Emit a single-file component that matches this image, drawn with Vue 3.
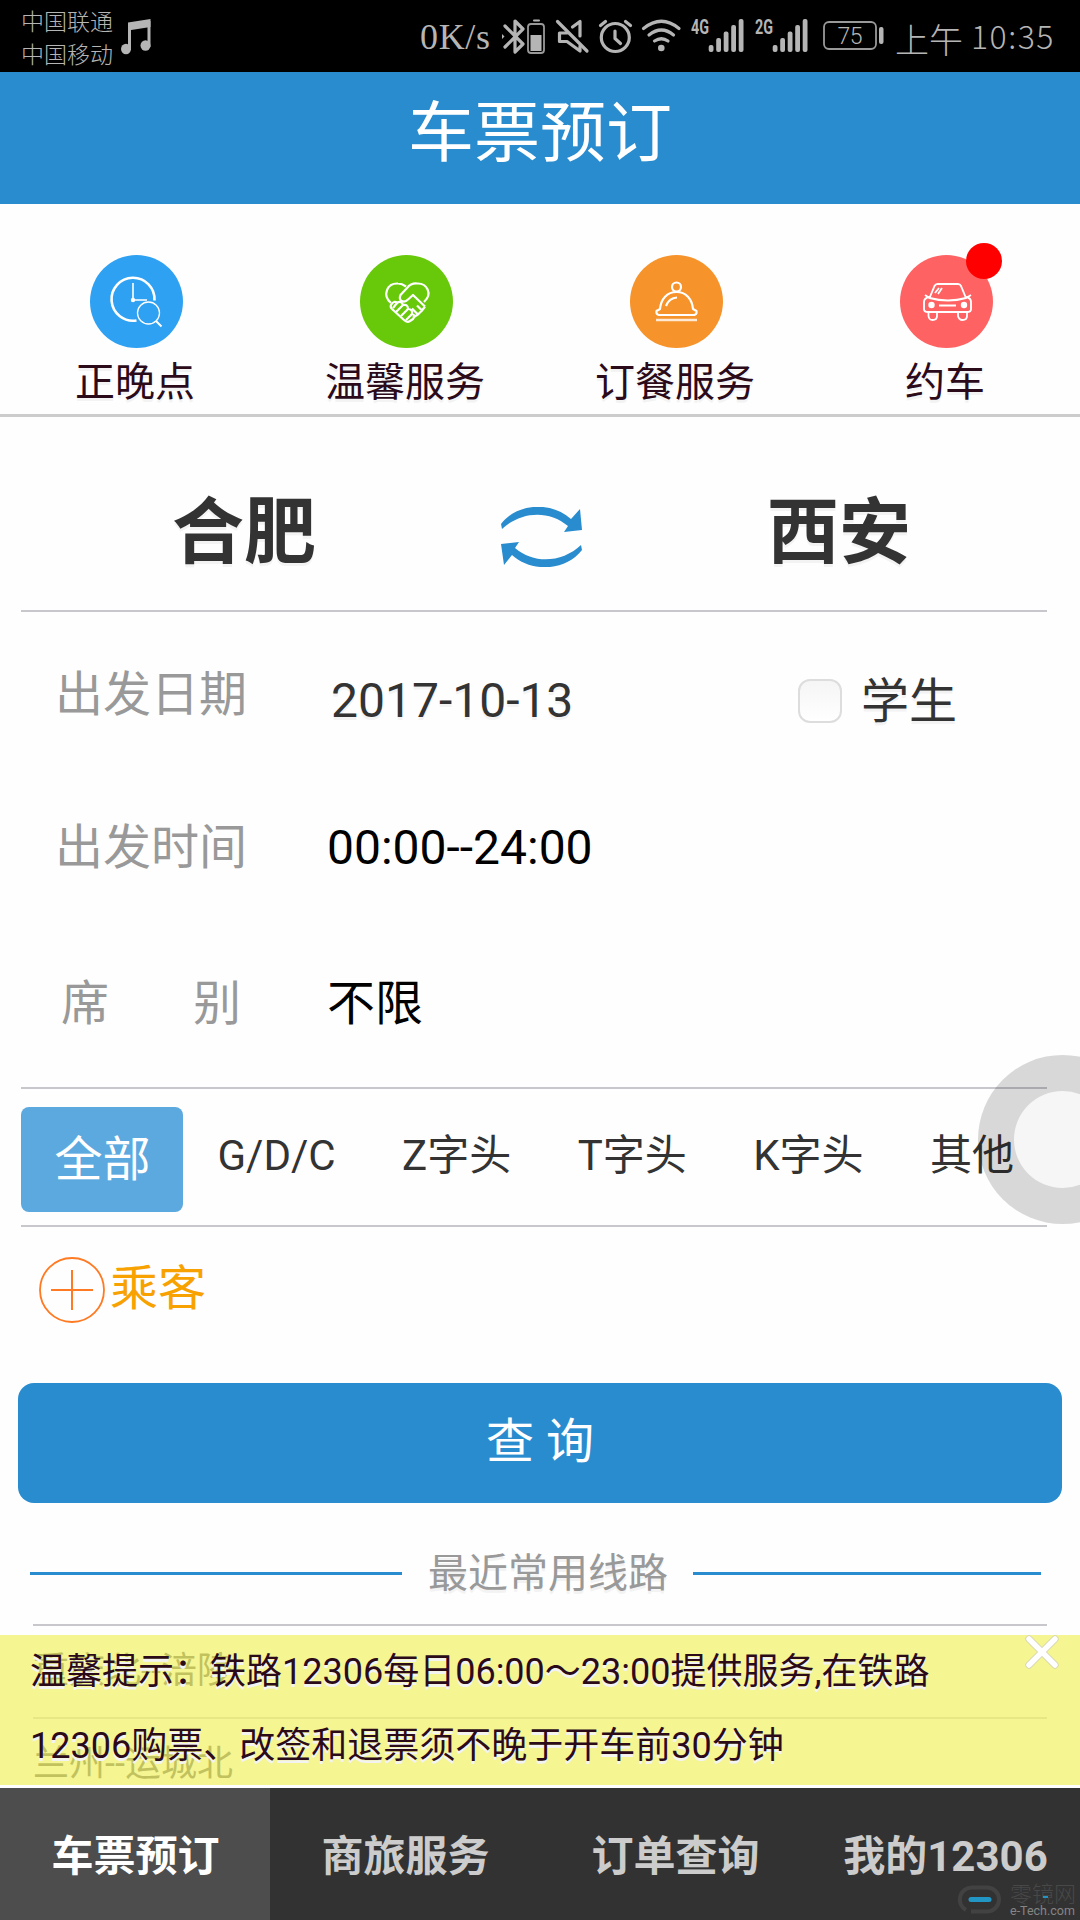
<template>
  <div class="page">
    <div class="status-bar">
      <div class="carriers">
        <div>中国联通</div>
        <div>中国移动</div>
      </div>
      <svg class="music" width="32" height="38" viewBox="0 0 32 38">
        <path d="M8.500 6 V32 M28 3 V29" fill="none" stroke="#b5b5b5" stroke-width="3" />
        <path d="M7 4.500 L29.500 1 V9 L7 12.500 Z" fill="#b5b5b5" />
        <ellipse cx="5" cy="31" rx="5" ry="5.200" fill="#b5b5b5" />
        <ellipse cx="24.500" cy="27.500" rx="5" ry="5.200" fill="#b5b5b5" />
      </svg>
      <div class="speed"><span>0</span><span>K</span><span>/</span><span>s</span></div>
      <svg class="status-icons" width="390" height="72" viewBox="500 0 390 72">
        <g fill="none" stroke="#b5b5b5" stroke-width="3.200" stroke-linecap="round" stroke-linejoin="round">
          <path d="M505 26 L523 44 L515 52 V21 L523 29 L505 47" />
          <path d="M502 34 v5 l2.500 -2.500z" stroke="none" fill="#b5b5b5" />
          <rect x="528" y="24" width="16" height="29" rx="3" stroke="#999" stroke-width="1.800" />
          <path d="M534 20.500 H539" stroke-width="2" />
          <rect x="530.500" y="35" width="11" height="16" fill="#b5b5b5" stroke="none" />
          <path d="M557.500 21.500 L587 51" />
          <path d="M572.500 27 L580 21.500 V36" />
          <path d="M567 33 H559.500 V41.500 H567 L580 51 V46" />
          <circle cx="615.300" cy="37.500" r="14" />
          <path d="M615 31 V38.500 L620.500 43.500 M600.500 25.500 L605.500 21.500 M630.500 25.500 L625.500 21.500" />
          <path d="M643.500 28.500 Q661.500 14 679 28.500 M649 35 Q661.500 25 673.500 35 M654.500 41 Q661.500 36.500 668 41" />
        </g>
        <g fill="#b5b5b5">
          <circle cx="661.300" cy="48" r="3.300" />
          <text x="691" y="34" class="net" textLength="18" lengthAdjust="spacingAndGlyphs">4G</text>
          <text x="755" y="34" class="net" textLength="18" lengthAdjust="spacingAndGlyphs">2G</text>
          <template v-for="start in [708.7, 772.700]" :key="start">
            <rect
              v-for="(h, i) in [7, 14, 20.5, 27, 33]"
              :key="i"
              :x="start + i * 7.5"
              :y="52 - h"
              width="4.800"
              :height="h"
              rx="2"
            />
          </template>
          <rect x="879" y="27" width="4.500" height="17" rx="2" />
          <text x="837.500" y="44" class="percent" textLength="25">75</text>
        </g>
        <rect x="824" y="22" width="52" height="27" rx="5" fill="none" stroke="#999" stroke-width="1.800" />
      </svg>
      <div class="clock"><span>上午</span><span class="digits">10:35</span></div>
    </div>

    <header class="header">车票预订</header>

    <div class="shortcuts">
      <div v-for="item in shortcuts" :key="item.name" class="shortcut">
        <div class="shortcut-icon" :class="item.icon">
          <svg v-if="item.icon === 'clock-icon'" width="93" height="93" viewBox="0 0 93 93">
            <path d="M46.500 65.500 A21.500 21.500 0 1 1 64.500 45.500" stroke-width="2.600" />
            <path d="M43 28 V45 H57" stroke-width="1.600" />
            <circle cx="43" cy="45" r="2.200" fill="#fff" stroke="none" />
            <circle cx="58.500" cy="58" r="11" stroke-width="1.300" />
            <path d="M66 66 L71.500 71.500" stroke-width="2" />
          </svg>
          <svg v-else-if="item.icon === 'heart-icon'" width="93" height="93" viewBox="0 0 93 93">
            <path d="M31 48 C22 40 27 28 38 28.500 Q42 28.500 46 31.500" />
            <path d="M64 47 C73 39 67 28 57 28.500 Q51 28 47 33 L40.500 40 C38 46 44 48.500 48 44.500 L53 40 L65 51.500" />
            <path d="M31 50 q3 -5 6 -2 q4 -3 6 2 q5 -1 5 4 q5 0 4 5 q4 1 1 5 l-3 2 q-3 2 -6 -1 L32 54 q-2 -2 -1 -4" />
            <path d="M37 48 l-4 5 M43 50 l-7 7 M48 54 l-7 7 M52 59 l-6 6 M65 51.500 l-3 4 l-5 -5 M62 55.500 l-4 4 l-6 -6 M58 59.500 l-5 3" />
          </svg>
          <svg v-else-if="item.icon === 'meal-icon'" width="93" height="93" viewBox="0 0 93 93">
            <circle cx="46.500" cy="32" r="4.500" />
            <path d="M30 54 C31 44 37 37 46.500 37 C56 37 62 44 63 54 L66.500 56 V58 Q66 60 63 60 H30 Q27 60 26.500 58 V56 Z" />
            <path d="M36 51 Q39 43 47 42.500" />
            <path d="M26 65 H67" stroke-width="2.600" stroke-opacity="0.800" />
          </svg>
          <svg v-else width="93" height="93" viewBox="0 0 93 93">
            <path d="M29.500 43 L34.500 31 Q35.500 29 37.500 29 H58 Q60 29 61 31 L66 43 Q48 48 29.500 43 L25 40 M66 43 L71 40" stroke-width="1.900" />
            <path d="M29.500 42 Q24 43 24 47 V54 Q24 57 28 57 H67 Q71 57 71 54 V47 Q71 43 66 42" stroke-width="1.900" />
            <path d="M28.500 57 V61 Q29 65 32.500 65 Q37 65 37 61 V57 M58 57 V61 Q59 65 62.500 65 Q67 65 67 61 V57 M39 50.500 H56 M35 38 L39 33 M38 39 L42 33" stroke-width="1.800" />
            <circle cx="31.500" cy="50" r="3.200" fill="#fff" stroke="none" />
            <circle cx="64" cy="50" r="3.200" fill="#fff" stroke="none" />
          </svg>
          <span v-if="item.badge" class="badge"></span>
        </div>
        <div class="shortcut-name">{{ item.name }}</div>
      </div>
    </div>

    <div class="cities">
      <div class="city">合肥</div>
      <svg width="81" height="60" viewBox="0 0 81 60">
        <path d="M0 17 C16 -4 50 -6 70 12 L79 2 L81 23 L63 25 L67 19 C47 2 19 5 1 22 Z" fill="#298ccf" />
        <path d="M81 43 C65 64 31 66 11 48 L3 58 L0 37 L18 35 L14 41 C34 58 62 55 80 38 Z" fill="#298ccf" />
      </svg>
      <div class="city">西安</div>
    </div>

    <div class="form">
      <div class="row row-date">
        <span class="label">出发日期</span>
        <span class="value date">2017-10-13</span>
        <span class="checkbox"></span>
        <span class="student">学生</span>
      </div>
      <div class="row row-time">
        <span class="label">出发时间</span>
        <span class="value">00:00--24:00</span>
      </div>
      <div class="row row-seat">
        <span class="label seat"><i>席</i><i>别</i></span>
        <span class="value">不限</span>
      </div>
    </div>

    <div class="types">
      <div
        v-for="type in types"
        :key="type"
        class="type"
        :class="{ active: type === currentType }"
        @click="currentType = type"
      >{{ type }}</div>
    </div>

    <div class="passenger">
      <svg width="66" height="66" viewBox="0 0 66 66">
        <circle cx="33" cy="33" r="32" fill="none" stroke="#ff7a22" stroke-width="1.800" />
        <path d="M12 33 H54 M33 13 V53" stroke="#ff7a22" stroke-width="2" />
      </svg>
      <span>乘客</span>
    </div>

    <button class="search">查 询</button>

    <div class="recent-title">
      <span class="bar bar-left"></span>
      <span>最近常用线路</span>
      <span class="bar bar-right"></span>
    </div>
    <div class="routes">
      <div v-for="route in routes" :key="route" class="route">{{ route }}</div>
    </div>

    <div class="notice">
      温馨提示：铁路12306每日06:00～23:00提供服务,在铁路<br />12306购票、改签和退票须不晚于开车前30分钟
      <svg class="close" width="34" height="34" viewBox="0 0 34 34">
        <path d="M4 4 L30 30 M30 4 L4 30" stroke="#d0d0b0" stroke-width="7" stroke-linecap="round" />
        <path d="M4 4 L30 30 M30 4 L4 30" stroke="#fff" stroke-width="5.500" stroke-linecap="round" />
      </svg>
    </div>

    <nav class="nav">
      <div v-for="(tab, i) in tabs" :key="tab" class="nav-item" :class="{ active: i === 0 }">{{ tab }}</div>
    </nav>

    <div class="assist"><span></span></div>

    <div class="watermark">
      <svg width="44" height="30" viewBox="0 0 44 30">
        <path d="M9 25 A12 12 0 0 1 15 2.500 H30 A12 12 0 0 1 30 26.500 H14" fill="none" stroke="#424242" stroke-width="4" />
        <path d="M14 14.500 H32" stroke="#2196c4" stroke-width="5" stroke-linecap="round" />
      </svg>
      <div class="watermark-text">
        <div class="wm-name">零镜网</div>
        <div class="wm-url">e-Tech.com</div>
        <span class="wm-dash"></span>
      </div>
    </div>
  </div>
</template>

<script setup>
import { ref } from 'vue';

const shortcuts = [
  { name: '正晚点', icon: 'clock-icon' },
  { name: '温馨服务', icon: 'heart-icon' },
  { name: '订餐服务', icon: 'meal-icon' },
  { name: '约车', icon: 'car-icon', badge: true }
];

const types = ['全部', 'G/D/C', 'Z字头', 'T字头', 'K字头', '其他'];
const currentType = ref('全部');

const routes = ['重庆北--涪陵', '兰州--运城北'];
const tabs = ['车票预订', '商旅服务', '订单查询', '我的12306'];
</script>

<style>
body {
  margin: 0;
  background: #fefefe;
}
</style>

<style scoped>
.page {
  position: relative;
  width: 1080px;
  height: 1920px;
  overflow: hidden;
  background: #fefefe;
  color: #333;
  font-family: Roboto, "Noto Sans CJK SC", sans-serif;
}

.page * {
  box-sizing: border-box;
}

.status-bar {
  display: flex;
  height: 72px;
  background: #000;
  color: #b5b5b5;
}

.carriers {
  width: 100px;
  margin-left: 21px;
  padding-top: 4px;
  font-size: 23px;
  font-weight: 300;
  line-height: 33px;
  font-family: "Noto Sans CJK SC", sans-serif;
}

.music {
  margin-top: 18px;
}

.speed {
  display: flex;
  justify-content: space-between;
  width: 70px;
  margin: 0 10px 0 267px;
  font-family: "Liberation Serif", serif;
  font-size: 36px;
  line-height: 75px;
}

.clock {
  display: flex;
  margin-left: 5px;
  font-family: "Noto Sans CJK SC", sans-serif;
  font-weight: 300;
  font-size: 34px;
  line-height: 77px;
}

.digits {
  margin-left: 8px;
  font-size: 32px;
  line-height: 71px;
  letter-spacing: 1.5px;
}

.net {
  font: bold 20px Roboto, sans-serif;
}

.percent {
  font: 300 23px Roboto, sans-serif;
}

.header {
  height: 132px;
  background: #298ccf;
  color: #fff;
  font-size: 66px;
  line-height: 123px;
  text-align: center;
}

.shortcuts {
  display: flex;
  height: 213px;
  padding-top: 51px;
  border-bottom: 3px solid #ccc;
}

.shortcut {
  display: flex;
  flex-direction: column;
  align-items: center;
  width: 270px;
}

.shortcut-icon {
  position: relative;
  width: 93px;
  height: 93px;
  margin-left: 3px;
  border-radius: 50%;
}

.shortcut-icon svg {
  display: block;
  fill: none;
  stroke: #fff;
  stroke-width: 2.2;
  stroke-linejoin: round;
}

.clock-icon {
  background: #2fa1f2;
}

.heart-icon {
  background: #68c90a;
}

.meal-icon {
  background: #f6932a;
}

.car-icon {
  background: #ff6262;
}

.badge {
  position: absolute;
  top: -12px;
  left: 66px;
  width: 36px;
  height: 36px;
  border-radius: 50%;
  background: #f00;
}

.shortcut-name {
  font-size: 40px;
  line-height: 70px;
  color: #2b0a1a;
  text-shadow: 0 3px 0 #f3f3f3;
}

.cities {
  display: flex;
  justify-content: space-between;
  height: 195px;
  margin: 0 33px 0 21px;
  padding: 0 136px 0 151px;
  border-bottom: 2px solid #c8c7cc;
}

.cities svg {
  margin-top: 90px;
}

.city {
  font-size: 72px;
  font-weight: bold;
  line-height: 232px;
  text-shadow: 0 3px 0 #f3f3f3;
}

.form {
  height: 477px;
  margin: 0 33px 0 21px;
  border-bottom: 2px solid #c8c7cc;
  font-size: 48px;
  line-height: 56px;
}

.row {
  display: flex;
  align-items: center;
  padding-left: 34px;
}

.row-date {
  height: 166px;
}

.row-time {
  height: 140px;
}

.row-seat {
  height: 171px;
}

.label {
  width: 272px;
  color: #999;
}

.seat {
  display: flex;
  gap: 84px;
  padding-left: 6px;
}

.seat i {
  font-style: normal;
}

.value {
  color: #000;
}

.date {
  width: 468px;
  padding: 12px 0 0 4px;
  color: #333;
  text-shadow: 0 3px 0 #f3f3f3;
}

.checkbox {
  width: 44px;
  height: 44px;
  margin: 11px 19px 0 3px;
  border: 2px solid #ddd;
  border-radius: 12px;
  background: linear-gradient(#f5f5f5, #fff);
}

.student {
  padding-top: 14px;
  text-shadow: 0 3px 0 #f3f3f3;
}

.types {
  display: flex;
  justify-content: space-between;
  height: 138px;
  margin: 0 33px 0 21px;
  padding: 18px 33px 0 0;
  border-bottom: 2px solid #c8c7cc;
}

.type {
  font-size: 42px;
  line-height: 97px;
}

.type.active {
  width: 162px;
  height: 105px;
  margin-right: -32px;
  padding-left: 1px;
  border-radius: 8px;
  background: #5ba9df;
  color: #fff;
  font-size: 48px;
  line-height: 106px;
  text-align: center;
}

.passenger {
  display: flex;
  height: 156px;
  padding: 30px 0 0 39px;
  color: #f7a200;
  font-size: 48px;
  line-height: 63px;
}

.passenger span {
  margin-left: 5px;
}

.search {
  display: block;
  width: 1044px;
  height: 120px;
  margin: 0 18px;
  padding: 0 0 3px;
  border: none;
  border-radius: 16px;
  background: #298ccf;
  color: #fff;
  font-family: inherit;
  font-size: 48px;
  line-height: 116px;
}

.recent-title {
  display: flex;
  align-items: center;
  height: 121px;
  padding: 20px 39px 0 30px;
  color: #999;
  font-size: 40px;
  line-height: 48px;
  text-shadow: 0 3px 0 #f3f3f3;
}

.bar {
  height: 3px;
  background: #298ccf;
}

.bar-left {
  width: 372px;
  margin-right: 26px;
}

.bar-right {
  width: 348px;
  margin-left: 25px;
}

.routes {
  margin: 0 33px;
}

.route {
  height: 93px;
  border-top: 2px solid #c8c7cc;
  font-size: 36px;
  line-height: 91px;
}

.notice {
  position: absolute;
  top: 1635px;
  left: 0;
  width: 1080px;
  height: 150px;
  padding-left: 30px;
  background: rgba(241, 241, 109, 0.75);
  color: #2b0a1a;
  font-size: 36px;
  line-height: 74px;
  text-shadow: 0 3px 0 #f3f3f3;
  white-space: nowrap;
}

.close {
  position: absolute;
  top: 0;
  right: 21px;
}

.nav {
  position: absolute;
  top: 1785px;
  left: 0;
  display: flex;
  width: 1080px;
  height: 135px;
  border-top: 3px solid #fff;
  background: #323232;
}

.nav-item {
  width: 270px;
  padding-left: 1px;
  color: #ccc;
  font-size: 42px;
  font-weight: bold;
  line-height: 137px;
  text-align: center;
}

.nav-item.active {
  background: #4d4d4d;
  color: #fff;
}

/* floating touch button, half off the right edge */
.assist {
  position: absolute;
  top: 1055px;
  left: 978px;
  width: 169px;
  height: 169px;
  padding: 36px;
  border-radius: 50%;
  background: rgba(0, 0, 0, 0.15);
}

.assist span {
  display: block;
  width: 97px;
  height: 97px;
  border-radius: 50%;
  background: #f6f6f6;
}

.watermark {
  position: absolute;
  top: 1885px;
  left: 957px;
  display: flex;
}

.watermark-text {
  position: relative;
  margin-left: 9px;
}

.wm-name {
  color: #484848;
  font-size: 22px;
  font-weight: 300;
  line-height: 20px;
}

.wm-url {
  color: #858585;
  font-size: 12.5px;
  line-height: 11px;
}

.wm-dash {
  position: absolute;
  top: 11px;
  left: 33px;
  width: 5px;
  height: 2px;
  background: #2196c4;
}
</style>
